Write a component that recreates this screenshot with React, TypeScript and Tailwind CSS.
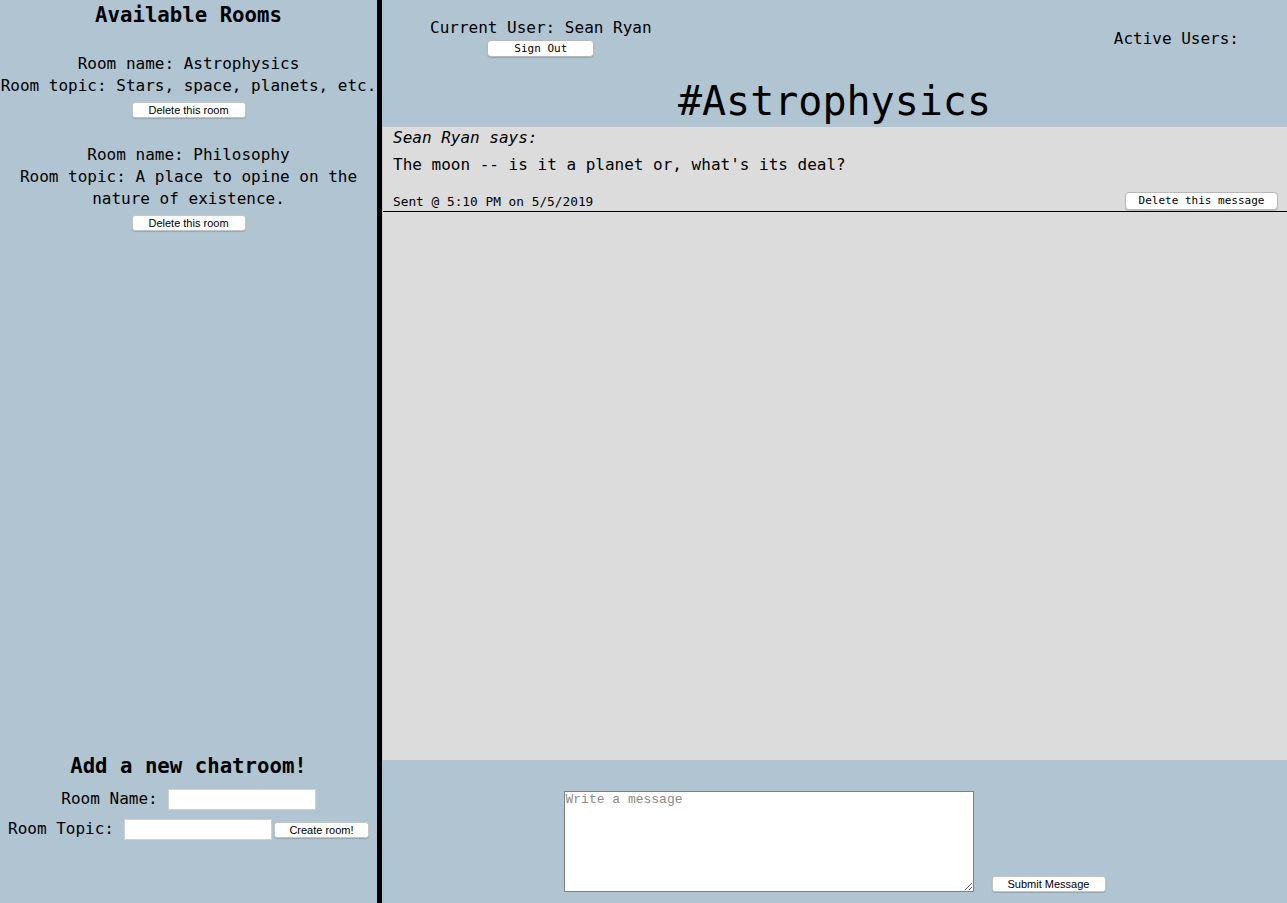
import React from 'react'

const mono = "font-['DejaVu_Sans_Mono','Liberation_Mono',monospace]"

const rooms = [
  { name: 'Astrophysics', topic: 'Stars, space, planets, etc.' },
  { name: 'Philosophy', topic: 'A place to opine on the nature of existence.' },
]

function SansButton({ children, className = '' }: { children: React.ReactNode; className?: string }) {
  return (
    <button
      className={`h-[16px] rounded-[3px] border border-[#c4c4c4] bg-white text-[11px] leading-[14px] text-black shadow-[0_1px_1px_rgba(0,0,0,0.15)] font-['Liberation_Sans',Arial,sans-serif] ${className}`}
    >
      {children}
    </button>
  )
}

function MonoButton({ children, className = '' }: { children: React.ReactNode; className?: string }) {
  return (
    <button
      className={`rounded-[4px] border border-[#b8b8b8] bg-white text-[11px] leading-[14px] text-black shadow-[0_1px_1px_rgba(0,0,0,0.15)] ${mono} ${className}`}
    >
      {children}
    </button>
  )
}

export default function App() {
  return (
    <div className={`flex h-[903px] w-[1287px] overflow-hidden text-black ${mono}`}>
      {/* Rooms sidebar */}
      <aside className="flex w-[382px] flex-col justify-between border-r-[5px] border-black bg-[#b0c4d1] text-center">
        <div>
          <h3 className="mt-[2px] text-[20.7px] font-bold leading-[26px]">Available Rooms</h3>
          <div className="mt-[25px] flex flex-col gap-[26px]">
            {rooms.map((room) => (
              <div key={room.name} className="flex flex-col items-center text-[16px] leading-[22px]">
                <p>Room name: {room.name}</p>
                <p>Room topic: {room.topic}</p>
                <SansButton className="mt-[5px] w-[114px]">Delete this room</SansButton>
              </div>
            ))}
          </div>
        </div>

        <div className="mb-[62px] flex flex-col items-center">
          <h3 className="text-[20.7px] font-bold leading-[26px]">Add a new chatroom!</h3>
          <div className="mt-[8px] flex items-center gap-[10px] text-[16px]">
            <label>Room Name:</label>
            <input className="h-[21px] w-[148px] border border-[#d0d0d0] bg-white" />
          </div>
          <div className="mt-[6px] flex items-center text-[16px]">
            <label>Room Topic:</label>
            <input className="ml-[10px] h-[21px] w-[148px] border border-[#d0d0d0] bg-white" />
            <SansButton className="ml-[2px] mt-[2px] w-[95px]">Create room!</SansButton>
          </div>
        </div>
      </aside>

      {/* Chat area */}
      <main className="flex flex-1 flex-col">
        <header className="bg-[#b0c4d1] pt-[17px] pb-[2px]">
          <div className="flex items-center justify-between px-[48px] text-[16px] leading-[22px]">
            <div className="flex flex-col items-center">
              <p>Current User: Sean Ryan</p>
              <MonoButton className="mt-[1px] h-[17px] w-[107px]">Sign Out</MonoButton>
            </div>
            <p className="mt-[3px]">Active Users:</p>
          </div>
          <h1 className="mt-[20px] text-center text-[40px] leading-[48px]">#Astrophysics</h1>
        </header>

        <section className="flex-1 border-l border-[#c8c8c8] bg-[#dcdcdc]">
          <div className="border-b border-black pl-[10px] pr-[9px] pb-[1px]">
            <p className="text-[16px] italic leading-[22px]">Sean Ryan says:</p>
            <p className="mt-[5px] text-[16px] leading-[22px]">The moon -- is it a planet or, what's its deal?</p>
            <div className="mt-[16px] flex items-end justify-between">
              <span className="text-[12.8px] leading-[17px]">Sent @ 5:10 PM on 5/5/2019</span>
              <MonoButton className="h-[18px] w-[153px]">Delete this message</MonoButton>
            </div>
          </div>
        </section>

        <footer className="flex h-[143px] items-end justify-center gap-[18px] bg-[#b0c4d1] pb-[11px]">
          <textarea
            placeholder="Write a message"
            className="h-[101px] w-[410px] border border-[#808080] bg-white px-[1px] text-[13px] leading-[15px] placeholder:text-[#8a8a8a] font-['Liberation_Mono','Courier_New',monospace]"
          />
          <SansButton className="w-[114px] text-[11.5px]">Submit Message</SansButton>
        </footer>
      </main>
    </div>
  )
}
